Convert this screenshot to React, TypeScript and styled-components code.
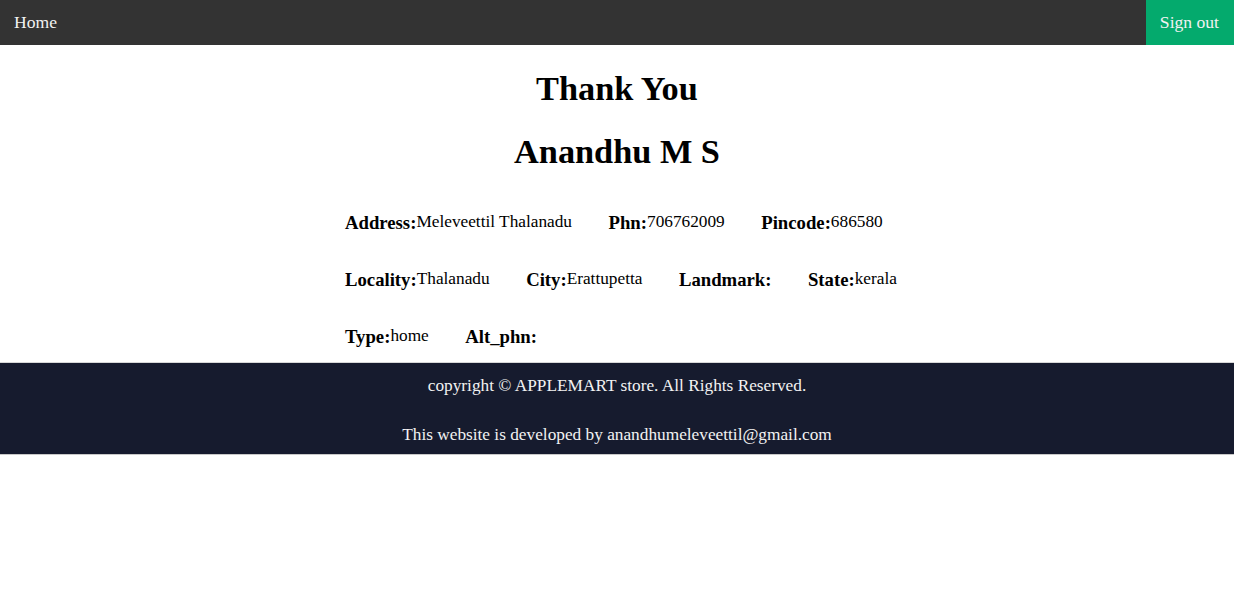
import React from "react";
import styled, { createGlobalStyle } from "styled-components";

const Global = createGlobalStyle`
  html, body { margin: 0; padding: 0; background: #fff; }
  body { font-family: "Liberation Serif", "Times New Roman", serif; color: #000; }
`;

const TopNav = styled.nav`
  display: flex;
  justify-content: space-between;
  align-items: stretch;
  background: #333;
  height: 45px;
`;

const NavLink = styled.a<{ $accent?: boolean }>`
  display: flex;
  align-items: center;
  padding: 0 15px 0 14px;
  font-size: 17.6px;
  color: #f2f2f2;
  text-decoration: none;
  background: ${(p) => (p.$accent ? "#04AA6D" : "transparent")};
`;

const Main = styled.main`
  display: flex;
  flex-direction: column;
  align-items: center;
  padding-top: 23px;
`;

const Titles = styled.div`
  display: flex;
  flex-direction: column;
  align-items: center;
  gap: 23px;
`;

const Title = styled.h1`
  font-size: 34.3px;
  font-weight: bold;
  margin: 0;
  line-height: 40px;
`;

const Details = styled.div`
  width: 544px;
  display: flex;
  flex-direction: column;
  gap: 37px;
  margin-top: 41px;
  margin-bottom: 16px;
`;

const Row = styled.div`
  display: flex;
  gap: 36.5px;
  align-items: center;
  height: 20px;
`;

const Field = styled.div`
  display: flex;
  align-items: center;
`;

const Label = styled.span`
  font-size: 18.72px;
  font-weight: bold;
  position: relative;
  top: 1px;
`;

const Value = styled.span`
  font-size: 17.3px;
`;

const Footer = styled.footer`
  background: #161b2e;
  color: #f2f2f2;
  display: flex;
  flex-direction: column;
  align-items: center;
  gap: 29px;
  padding: 13px 0 9px;
  font-size: 17.3px;
  border-top: 1px solid #d8d8d8;
  border-bottom: 1px solid #c8c8c8;
`;

const FootLine = styled.p`
  margin: 0;
  line-height: 20px;
`;

const fields: [string, string][][] = [
  [
    ["Address:", "Meleveettil Thalanadu"],
    ["Phn:", "706762009"],
    ["Pincode:", "686580"],
  ],
  [
    ["Locality:", "Thalanadu"],
    ["City:", "Erattupetta"],
    ["Landmark:", ""],
    ["State:", "kerala"],
  ],
  [
    ["Type:", "home"],
    ["Alt_phn:", ""],
  ],
];

export default function App() {
  return (
    <>
      <Global />
      <TopNav>
        <NavLink href="#">Home</NavLink>
        <NavLink href="#" $accent>
          Sign out
        </NavLink>
      </TopNav>
      <Main>
        <Titles>
          <Title>Thank You</Title>
          <Title>Anandhu M S</Title>
        </Titles>
        <Details>
          {fields.map((row, i) => (
            <Row key={i}>
              {row.map(([l, v]) => (
                <Field key={l}>
                  <Label>{l}</Label>
                  {v && <Value>{v}</Value>}
                </Field>
              ))}
            </Row>
          ))}
        </Details>
      </Main>
      <Footer>
        <FootLine>copyright © APPLEMART store. All Rights Reserved.</FootLine>
        <FootLine>This website is developed by anandhumeleveettil@gmail.com</FootLine>
      </Footer>
    </>
  );
}
